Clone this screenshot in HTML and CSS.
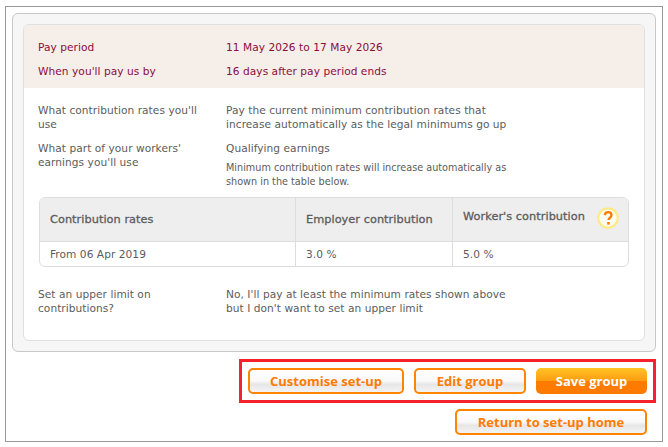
FILE: index.html
```html
<!DOCTYPE html>
<html lang="en">
<head>
<meta charset="utf-8">
<title>Group summary</title>
<link rel="stylesheet" href="styles.css">
</head>
<body>
<main class="frame">
  <section class="panel">
    <div class="card">
      <div class="band">
        <div class="row band-row"><div class="label">Pay period</div><div class="value">11 May 2026 to 17 May 2026</div></div>
        <div class="row band-row"><div class="label">When you'll pay us by</div><div class="value">16 days after pay period ends</div></div>
      </div>
      <div class="body">
        <div class="row info-row"><div class="label">What contribution rates you'll use</div><div class="value">Pay the current minimum contribution rates that increase automatically as the legal minimums go up</div></div>
        <div class="row info-row"><div class="label">What part of your workers' earnings you'll use</div><div class="value">Qualifying earnings<p class="note">Minimum contribution rates will increase automatically as shown in the table below.</p></div></div>
        <div class="rates">
          <div class="cell head c1">Contribution rates</div>
          <div class="cell head c2">Employer contribution</div>
          <div class="cell head c3"><span class="head-up">Worker's contribution</span>
            <svg class="help" width="24" height="24" viewBox="0 0 24 24" aria-hidden="true"><circle cx="12" cy="12" r="9.7" fill="#fffdf2" stroke="#ffea8a" stroke-width="2.2"/><path d="M8.8 9.2c.2-2 1.5-3.1 3.4-3.1 2 0 3.3 1.2 3.3 2.9 0 1.5-.8 2.2-1.8 3-.8.6-1.2 1.1-1.2 2.1" fill="none" stroke="#ff7a00" stroke-width="2.3"/><rect x="11.2" y="16" width="2.5" height="2.6" fill="#ff7a00"/></svg>
          </div>
          <div class="cell c1">From 06 Apr 2019</div>
          <div class="cell c2">3.0 %</div>
          <div class="cell c3">5.0 %</div>
        </div>
        <div class="row limit-row"><div class="label">Set an upper limit on contributions?</div><div class="value">No, I'll pay at least the minimum rates shown above but I don't want to set an upper limit</div></div>
      </div>
    </div>
  </section>
  <div class="actions">
    <div class="highlight">
      <a class="btn btn-custom">Customise set-up</a>
      <a class="btn btn-edit">Edit group</a>
      <a class="btn btn-primary">Save group</a>
    </div>
    <a class="btn btn-return">Return to set-up home</a>
  </div>
</main>
</body>
</html>
```
FILE: styles.css
```css
* { box-sizing: border-box; }
html, body { margin: 0; background: #fff; }
body {
  height: 447px;
  padding: 6px 5px;
  overflow: hidden;
  font-family: "DejaVu Sans", sans-serif;
  font-size: 10.6px;
  letter-spacing: 0.05px;
  line-height: 14px;
  color: #5c5c5c;
}
.frame {
  height: 436px;
  width: 658px;
  border: 1px solid #999;
  padding: 6px;
}
.panel {
  height: 339px;
  background: #f6f6f6;
  border: 1px solid #c8c8c8;
  border-radius: 6px;
  padding: 10px;
}
.card {
  height: 317px;
  background: #fff;
  border: 1px solid #e0e0e0;
  border-radius: 6px;
  overflow: hidden;
}
.band {
  height: 63px;
  background: #f6eee9;
  color: #8a0f3c;
  padding-top: 10px;
}
.row { display: flex; }
.label { width: 188px; flex: none; padding-right: 20px; }
.value { width: 290px; }
.band-row { height: 24px; padding-left: 14px; align-items: center; }
.body { padding: 15px 14px 0; }
.info-row { margin-bottom: 10px; }
.info-row + .info-row { margin-bottom: 0; }
.note { margin: 6px 0 0; font-size: 9.68px; letter-spacing: 0; }
.rates {
  display: grid;
  grid-template-columns: 255px 157px 1fr;
  grid-template-rows: 44px 24px;
  margin: 8px 1px 0;
  border: 1px solid #ddd;
  border-radius: 6px;
  overflow: hidden;
}
.cell {
  display: flex;
  align-items: center;
  padding-left: 10px;
  border-left: 1px solid #ddd;
}
.c1 { border-left: 0; }
.head {
  background: #eee;
  border-bottom: 1px solid #ddd;
  -webkit-text-stroke: 0.3px #5c5c5c;
  font-size: 11.3px;
  letter-spacing: 0.05px;
}
.c3.head { justify-content: space-between; padding-right: 8px; }
.head-up { margin-top: -6px; }
.help { flex: none; margin-top: -3px; }
.limit-row { margin-top: 20px; }
.actions {
  display: flex;
  flex-direction: column;
  align-items: flex-end;
  margin-top: 7px;
}
.highlight {
  display: flex;
  gap: 10px;
  width: 417px;
  height: 44px;
  border: 3px solid #f5222d;
  padding: 6px;
}
.btn {
  display: flex;
  align-items: center;
  justify-content: center;
  height: 26px;
  border: 2px solid #ff8400;
  border-radius: 5px;
  background: linear-gradient(#fff 0, #f9f9f9 50%, #e6e6e6 65%, #f4f4f4 100%);
  color: #ff7b00;
  font-family: "Open Sans", sans-serif;
  font-weight: 700;
  font-size: 13px;
  letter-spacing: 0;
}
.btn-custom { width: 156px; }
.btn-edit { width: 112px; }
.btn-primary {
  width: 111px;
  color: #fff;
  border: 0;
  background: linear-gradient(#ffc425 0, #ff9c12 50%, #ff7b00 52%, #ff7b00 100%);
}
.btn-return { width: 192px; margin: 6px 9px 0 0; }
```
